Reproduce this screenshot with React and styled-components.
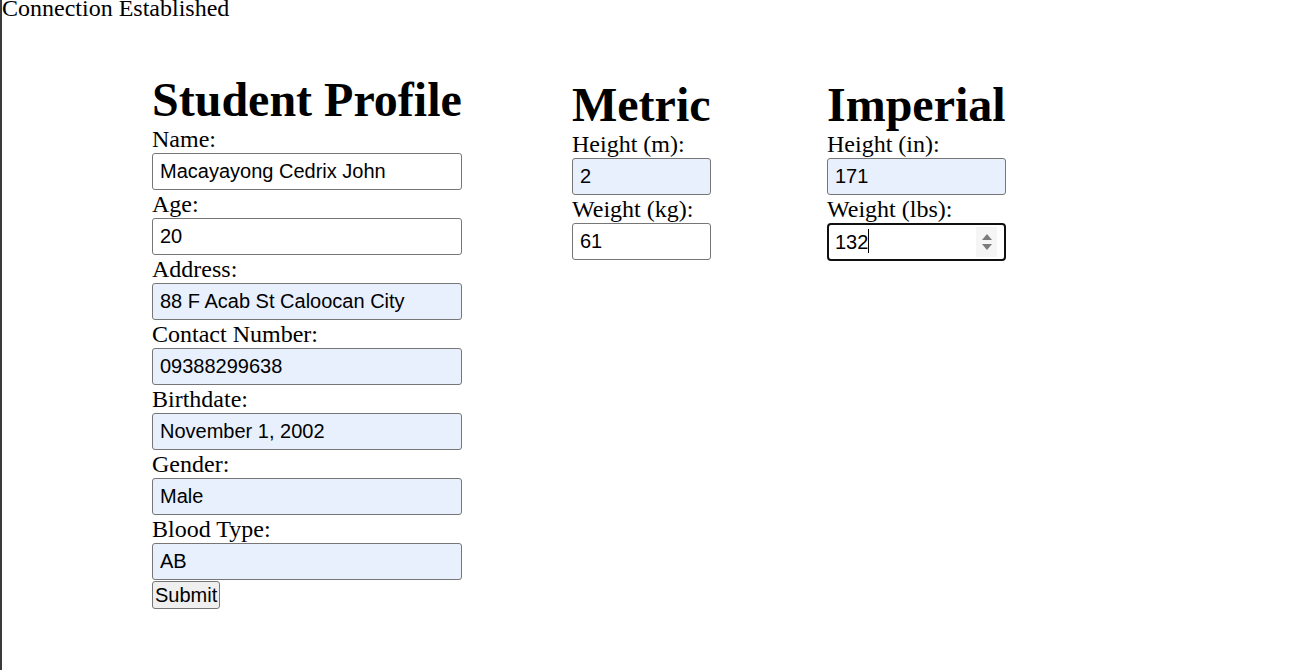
import React from "react";
import styled, { createGlobalStyle, css } from "styled-components";

const GlobalStyle = createGlobalStyle`
  *, *::before, *::after { box-sizing: border-box; }
  html, body { height: 100%; }
  body {
    margin: 0;
    border-left: 2px solid #3a3a3a;
    background: #ffffff;
    color: #000000;
    font-family: "Liberation Serif", "Times New Roman", serif;
    font-size: 24px;
  }
`;

const Page = styled.div`
  display: flex;
  flex-direction: column;
`;

const StatusLine = styled.div`
  font-size: 24px;
  line-height: 17px;
  height: 17px;
  white-space: nowrap;
`;

const Main = styled.div`
  display: grid;
  grid-template-columns: 420px 255px 179px;
  align-items: start;
  padding-left: 150px;
  margin-top: 58px;
`;

const Column = styled.div`
  display: flex;
  flex-direction: column;
  align-items: flex-start;
  margin-top: ${(p) => p.$offset || 0}px;
`;

const Heading = styled.h1`
  margin: 0;
  font-size: 48px;
  line-height: 50px;
  font-weight: bold;
  white-space: nowrap;
`;

const Label = styled.label`
  display: block;
  font-size: 24px;
  line-height: 28px;
  white-space: nowrap;
`;

const Input = styled.input`
  display: block;
  width: ${(p) => p.$width}px;
  height: 37px;
  margin: 0;
  padding: 0 7px;
  border: 1px solid #767676;
  border-radius: 3px;
  background: ${(p) => (p.$autofill ? "#e8f0fe" : "#ffffff")};
  color: #000000;
  font-family: "Liberation Sans", Arial, sans-serif;
  font-size: 20px;
  outline: none;
  ${(p) =>
    p.$focused &&
    css`
      height: 38px;
      border: 2px solid #101010;
      border-radius: 4px;
      padding: 0 6px;
    `}
`;

const FieldWrap = styled.div`
  position: relative;
  width: ${(p) => p.$width}px;
`;

const Caret = styled.span`
  position: absolute;
  left: 41px;
  top: 6px;
  width: 1px;
  height: 24px;
  background: #000000;
`;

const Spinner = styled.span`
  position: absolute;
  right: 9px;
  top: 4px;
  bottom: 4px;
  width: 21px;
  background: #f5f5f5;
  display: flex;
  flex-direction: column;
  align-items: center;
  justify-content: center;
  gap: 4px;
`;

const Arrow = styled.span`
  width: 0;
  height: 0;
  border-left: 5px solid transparent;
  border-right: 5px solid transparent;
  ${(p) =>
    p.$down
      ? css`border-top: 6px solid #7b7b7b;`
      : css`border-bottom: 6px solid #7b7b7b;`}
`;

const SubmitButton = styled.button`
  margin-top: 1px;
  height: 28px;
  padding: 0 2px;
  border: 1px solid #767676;
  border-radius: 3px;
  background: #efefef;
  color: #000000;
  font-family: "Liberation Sans", Arial, sans-serif;
  font-size: 20px;
  line-height: 24px;
`;

const profileFields = [
  { label: "Name:", value: "Macayayong Cedrix John", autofill: false },
  { label: "Age:", value: "20", autofill: false },
  { label: "Address:", value: "88 F Acab St Caloocan City", autofill: true },
  { label: "Contact Number:", value: "09388299638", autofill: true },
  { label: "Birthdate:", value: "November 1, 2002", autofill: true },
  { label: "Gender:", value: "Male", autofill: true },
  { label: "Blood Type:", value: "AB", autofill: true },
];

export default function App() {
  return (
    <>
      <GlobalStyle />
      <Page>
        <StatusLine>Connection Established</StatusLine>
        <Main>
          <Column>
            <Heading>Student Profile</Heading>
            {profileFields.map((f) => (
              <React.Fragment key={f.label}>
                <Label>{f.label}</Label>
                <Input $width={310} $autofill={f.autofill} defaultValue={f.value} readOnly />
              </React.Fragment>
            ))}
            <SubmitButton type="button">Submit</SubmitButton>
          </Column>

          <Column $offset={5}>
            <Heading>Metric</Heading>
            <Label>Height (m):</Label>
            <Input $width={139} $autofill defaultValue="2" readOnly />
            <Label>Weight (kg):</Label>
            <Input $width={139} defaultValue="61" readOnly />
          </Column>

          <Column $offset={5}>
            <Heading>Imperial</Heading>
            <Label>Height (in):</Label>
            <Input $width={179} $autofill defaultValue="171" readOnly />
            <Label>Weight (lbs):</Label>
            <FieldWrap $width={179}>
              <Input $width={179} $focused defaultValue="132" readOnly />
              <Caret />
              <Spinner>
                <Arrow />
                <Arrow $down />
              </Spinner>
            </FieldWrap>
          </Column>
        </Main>
      </Page>
    </>
  );
}
